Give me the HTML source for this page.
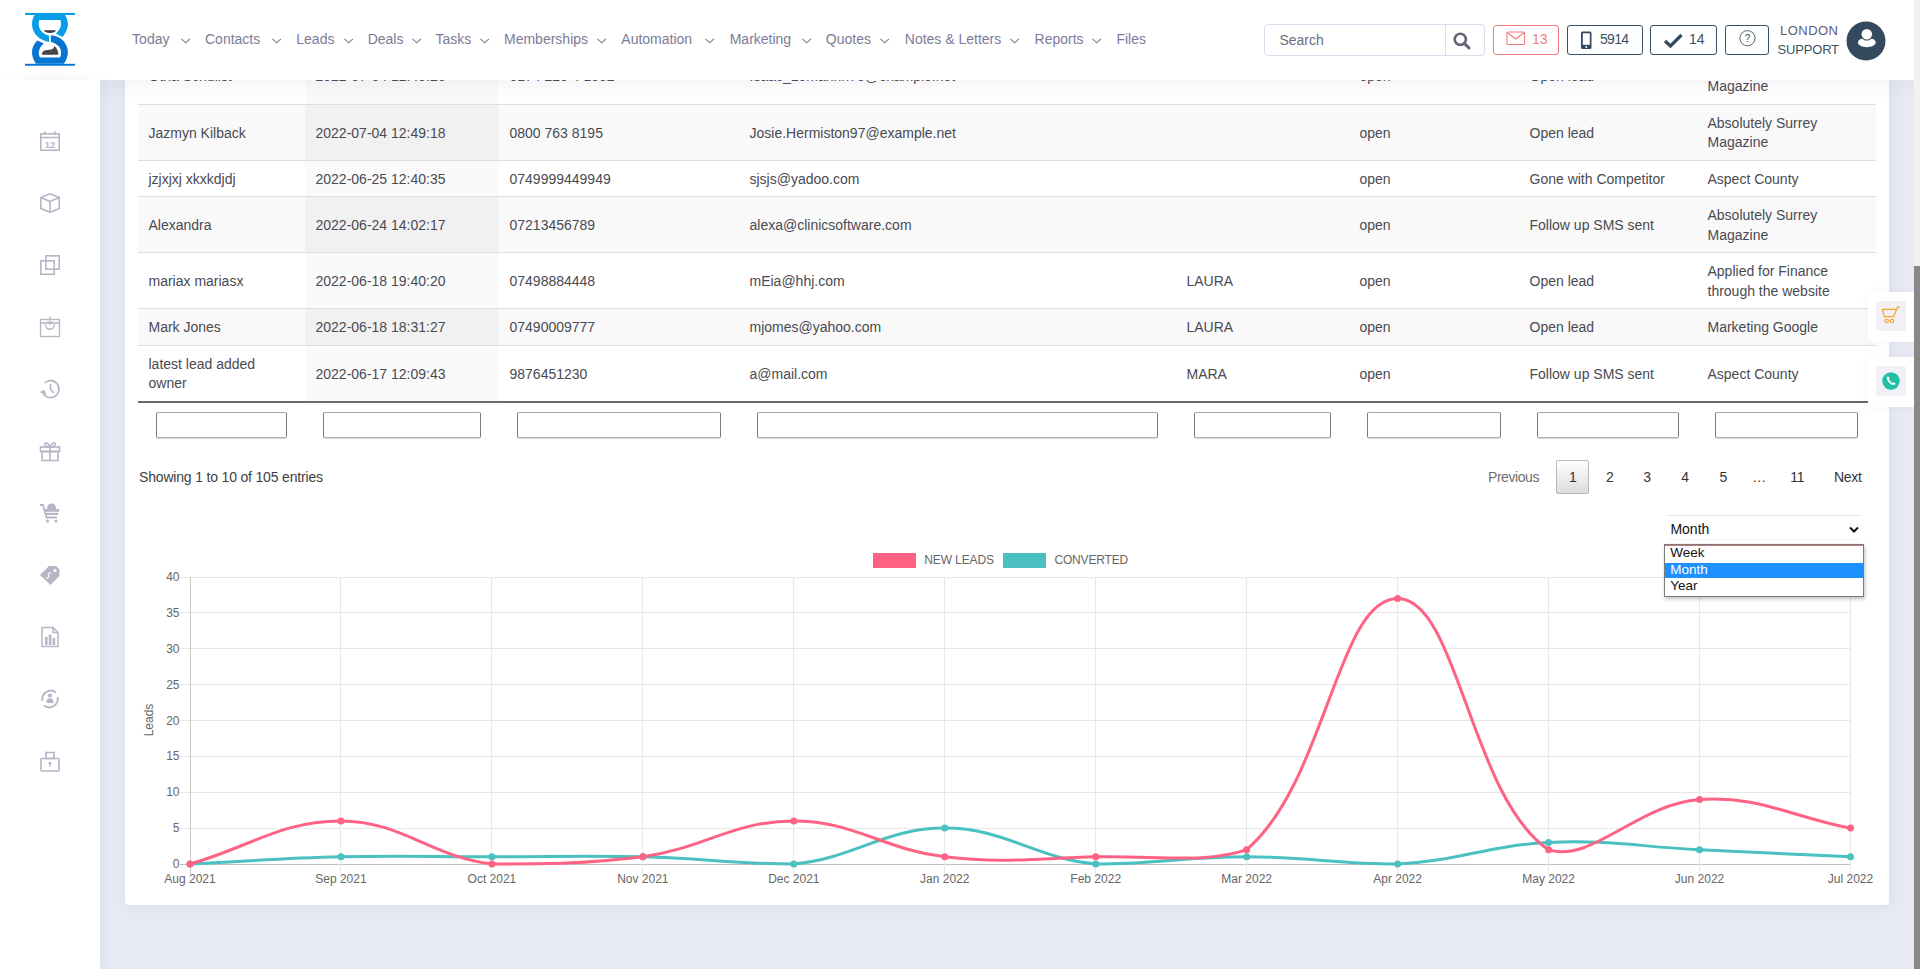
<!DOCTYPE html>
<html><head><meta charset="utf-8"><title>Leads</title>
<style>
html,body{margin:0;padding:0;}
body{width:1920px;height:969px;overflow:hidden;position:relative;background:#fff;font-family:"Liberation Sans",sans-serif;}
.t{position:absolute;white-space:nowrap;font-family:"Liberation Sans",sans-serif;}
</style></head><body>
<div style="position:absolute;left:100px;top:0px;width:1814px;height:969px;background:#e7e9f3;"></div>
<div style="position:absolute;left:0px;top:0px;width:100px;height:969px;background:#fff;box-shadow:2px 0 12px rgba(120,125,160,0.10);"></div>
<div style="position:absolute;left:125px;top:20px;width:1764px;height:885px;background:#fff;border-radius:4px;box-shadow:0 0 14px rgba(120,125,170,0.10);"></div>
<div style="position:absolute;left:138px;top:47px;width:1738px;height:57px;background:#fff;"></div>
<div style="position:absolute;left:305px;top:47px;width:194px;height:57px;background:#fafafa;"></div>
<div style="position:absolute;left:138px;top:104px;width:1738px;height:56px;background:#f9f9f9;"></div>
<div style="position:absolute;left:305px;top:104px;width:194px;height:56px;background:#f1f1f1;"></div>
<div style="position:absolute;left:138px;top:104px;width:1738px;height:1px;background:#dedede;"></div>
<div style="position:absolute;left:138px;top:160px;width:1738px;height:36px;background:#fff;"></div>
<div style="position:absolute;left:305px;top:160px;width:194px;height:36px;background:#fafafa;"></div>
<div style="position:absolute;left:138px;top:160px;width:1738px;height:1px;background:#dedede;"></div>
<div style="position:absolute;left:138px;top:196px;width:1738px;height:56px;background:#f9f9f9;"></div>
<div style="position:absolute;left:305px;top:196px;width:194px;height:56px;background:#f1f1f1;"></div>
<div style="position:absolute;left:138px;top:196px;width:1738px;height:1px;background:#dedede;"></div>
<div style="position:absolute;left:138px;top:252px;width:1738px;height:56px;background:#fff;"></div>
<div style="position:absolute;left:305px;top:252px;width:194px;height:56px;background:#fafafa;"></div>
<div style="position:absolute;left:138px;top:252px;width:1738px;height:1px;background:#dedede;"></div>
<div style="position:absolute;left:138px;top:308px;width:1738px;height:37px;background:#f9f9f9;"></div>
<div style="position:absolute;left:305px;top:308px;width:194px;height:37px;background:#f1f1f1;"></div>
<div style="position:absolute;left:138px;top:308px;width:1738px;height:1px;background:#dedede;"></div>
<div style="position:absolute;left:138px;top:345px;width:1738px;height:56px;background:#fff;"></div>
<div style="position:absolute;left:305px;top:345px;width:194px;height:56px;background:#fafafa;"></div>
<div style="position:absolute;left:138px;top:345px;width:1738px;height:1px;background:#dedede;"></div>
<div style="position:absolute;left:138px;top:401px;width:1738px;height:2px;background:#6a6a6a;"></div>
<div class="t" style="left:148.50px;top:69.05px;font-size:14px;line-height:14px;color:#4a4a52;">Otha Schulist</div>
<div class="t" style="left:315.50px;top:69.05px;font-size:14px;line-height:14px;color:#4a4a52;">2022-07-04 12:49:26</div>
<div class="t" style="left:509.50px;top:69.05px;font-size:14px;line-height:14px;color:#4a4a52;">0174 220 4 1552</div>
<div class="t" style="left:749.50px;top:69.05px;font-size:14px;line-height:14px;color:#4a4a52;">Isaac_Lemanhn70@example.net</div>
<div class="t" style="left:1359.50px;top:69.05px;font-size:14px;line-height:14px;color:#4a4a52;">open</div>
<div class="t" style="left:1529.50px;top:69.05px;font-size:14px;line-height:14px;color:#4a4a52;">Open lead</div>
<div class="t" style="left:1707.50px;top:59.30px;font-size:14px;line-height:14px;color:#4a4a52;">Absolutely Surrey</div>
<div class="t" style="left:1707.50px;top:78.80px;font-size:14px;line-height:14px;color:#4a4a52;">Magazine</div>
<div class="t" style="left:148.50px;top:125.55px;font-size:14px;line-height:14px;color:#4a4a52;">Jazmyn Kilback</div>
<div class="t" style="left:315.50px;top:125.55px;font-size:14px;line-height:14px;color:#4a4a52;">2022-07-04 12:49:18</div>
<div class="t" style="left:509.50px;top:125.55px;font-size:14px;line-height:14px;color:#4a4a52;">0800 763 8195</div>
<div class="t" style="left:749.50px;top:125.55px;font-size:14px;line-height:14px;color:#4a4a52;">Josie.Hermiston97@example.net</div>
<div class="t" style="left:1359.50px;top:125.55px;font-size:14px;line-height:14px;color:#4a4a52;">open</div>
<div class="t" style="left:1529.50px;top:125.55px;font-size:14px;line-height:14px;color:#4a4a52;">Open lead</div>
<div class="t" style="left:1707.50px;top:115.80px;font-size:14px;line-height:14px;color:#4a4a52;">Absolutely Surrey</div>
<div class="t" style="left:1707.50px;top:135.30px;font-size:14px;line-height:14px;color:#4a4a52;">Magazine</div>
<div class="t" style="left:148.50px;top:171.80px;font-size:14px;line-height:14px;color:#4a4a52;">jzjxjxj xkxkdjdj</div>
<div class="t" style="left:315.50px;top:171.80px;font-size:14px;line-height:14px;color:#4a4a52;">2022-06-25 12:40:35</div>
<div class="t" style="left:509.50px;top:171.80px;font-size:14px;line-height:14px;color:#4a4a52;">0749999449949</div>
<div class="t" style="left:749.50px;top:171.80px;font-size:14px;line-height:14px;color:#4a4a52;">sjsjs@yadoo.com</div>
<div class="t" style="left:1359.50px;top:171.80px;font-size:14px;line-height:14px;color:#4a4a52;">open</div>
<div class="t" style="left:1529.50px;top:171.80px;font-size:14px;line-height:14px;color:#4a4a52;">Gone with Competitor</div>
<div class="t" style="left:1707.50px;top:171.80px;font-size:14px;line-height:14px;color:#4a4a52;">Aspect County</div>
<div class="t" style="left:148.50px;top:218.05px;font-size:14px;line-height:14px;color:#4a4a52;">Alexandra</div>
<div class="t" style="left:315.50px;top:218.05px;font-size:14px;line-height:14px;color:#4a4a52;">2022-06-24 14:02:17</div>
<div class="t" style="left:509.50px;top:218.05px;font-size:14px;line-height:14px;color:#4a4a52;">07213456789</div>
<div class="t" style="left:749.50px;top:218.05px;font-size:14px;line-height:14px;color:#4a4a52;">alexa@clinicsoftware.com</div>
<div class="t" style="left:1359.50px;top:218.05px;font-size:14px;line-height:14px;color:#4a4a52;">open</div>
<div class="t" style="left:1529.50px;top:218.05px;font-size:14px;line-height:14px;color:#4a4a52;">Follow up SMS sent</div>
<div class="t" style="left:1707.50px;top:208.30px;font-size:14px;line-height:14px;color:#4a4a52;">Absolutely Surrey</div>
<div class="t" style="left:1707.50px;top:227.80px;font-size:14px;line-height:14px;color:#4a4a52;">Magazine</div>
<div class="t" style="left:148.50px;top:274.05px;font-size:14px;line-height:14px;color:#4a4a52;">mariax mariasx</div>
<div class="t" style="left:315.50px;top:274.05px;font-size:14px;line-height:14px;color:#4a4a52;">2022-06-18 19:40:20</div>
<div class="t" style="left:509.50px;top:274.05px;font-size:14px;line-height:14px;color:#4a4a52;">07498884448</div>
<div class="t" style="left:749.50px;top:274.05px;font-size:14px;line-height:14px;color:#4a4a52;">mEia@hhj.com</div>
<div class="t" style="left:1186.50px;top:274.05px;font-size:14px;line-height:14px;color:#4a4a52;">LAURA</div>
<div class="t" style="left:1359.50px;top:274.05px;font-size:14px;line-height:14px;color:#4a4a52;">open</div>
<div class="t" style="left:1529.50px;top:274.05px;font-size:14px;line-height:14px;color:#4a4a52;">Open lead</div>
<div class="t" style="left:1707.50px;top:264.30px;font-size:14px;line-height:14px;color:#4a4a52;">Applied for Finance</div>
<div class="t" style="left:1707.50px;top:283.80px;font-size:14px;line-height:14px;color:#4a4a52;">through the website</div>
<div class="t" style="left:148.50px;top:320.30px;font-size:14px;line-height:14px;color:#4a4a52;">Mark Jones</div>
<div class="t" style="left:315.50px;top:320.30px;font-size:14px;line-height:14px;color:#4a4a52;">2022-06-18 18:31:27</div>
<div class="t" style="left:509.50px;top:320.30px;font-size:14px;line-height:14px;color:#4a4a52;">07490009777</div>
<div class="t" style="left:749.50px;top:320.30px;font-size:14px;line-height:14px;color:#4a4a52;">mjomes@yahoo.com</div>
<div class="t" style="left:1186.50px;top:320.30px;font-size:14px;line-height:14px;color:#4a4a52;">LAURA</div>
<div class="t" style="left:1359.50px;top:320.30px;font-size:14px;line-height:14px;color:#4a4a52;">open</div>
<div class="t" style="left:1529.50px;top:320.30px;font-size:14px;line-height:14px;color:#4a4a52;">Open lead</div>
<div class="t" style="left:1707.50px;top:320.30px;font-size:14px;line-height:14px;color:#4a4a52;">Marketing Google</div>
<div class="t" style="left:148.50px;top:356.80px;font-size:14px;line-height:14px;color:#4a4a52;">latest lead added</div>
<div class="t" style="left:148.50px;top:376.30px;font-size:14px;line-height:14px;color:#4a4a52;">owner</div>
<div class="t" style="left:315.50px;top:366.55px;font-size:14px;line-height:14px;color:#4a4a52;">2022-06-17 12:09:43</div>
<div class="t" style="left:509.50px;top:366.55px;font-size:14px;line-height:14px;color:#4a4a52;">9876451230</div>
<div class="t" style="left:749.50px;top:366.55px;font-size:14px;line-height:14px;color:#4a4a52;">a@mail.com</div>
<div class="t" style="left:1186.50px;top:366.55px;font-size:14px;line-height:14px;color:#4a4a52;">MARA</div>
<div class="t" style="left:1359.50px;top:366.55px;font-size:14px;line-height:14px;color:#4a4a52;">open</div>
<div class="t" style="left:1529.50px;top:366.55px;font-size:14px;line-height:14px;color:#4a4a52;">Follow up SMS sent</div>
<div class="t" style="left:1707.50px;top:366.55px;font-size:14px;line-height:14px;color:#4a4a52;">Aspect County</div>
<div style="position:absolute;left:156px;top:412px;width:131px;height:26px;box-sizing:border-box;border:1px solid #7a7a7a;border-top-color:#a8a8a8;border-bottom-color:#b0b0b0;border-radius:2px;background:#fff;box-shadow:0 1px 0 #d8d8d8;"></div>
<div style="position:absolute;left:323px;top:412px;width:158px;height:26px;box-sizing:border-box;border:1px solid #7a7a7a;border-top-color:#a8a8a8;border-bottom-color:#b0b0b0;border-radius:2px;background:#fff;box-shadow:0 1px 0 #d8d8d8;"></div>
<div style="position:absolute;left:517px;top:412px;width:204px;height:26px;box-sizing:border-box;border:1px solid #7a7a7a;border-top-color:#a8a8a8;border-bottom-color:#b0b0b0;border-radius:2px;background:#fff;box-shadow:0 1px 0 #d8d8d8;"></div>
<div style="position:absolute;left:757px;top:412px;width:401px;height:26px;box-sizing:border-box;border:1px solid #7a7a7a;border-top-color:#a8a8a8;border-bottom-color:#b0b0b0;border-radius:2px;background:#fff;box-shadow:0 1px 0 #d8d8d8;"></div>
<div style="position:absolute;left:1194px;top:412px;width:137px;height:26px;box-sizing:border-box;border:1px solid #7a7a7a;border-top-color:#a8a8a8;border-bottom-color:#b0b0b0;border-radius:2px;background:#fff;box-shadow:0 1px 0 #d8d8d8;"></div>
<div style="position:absolute;left:1367px;top:412px;width:134px;height:26px;box-sizing:border-box;border:1px solid #7a7a7a;border-top-color:#a8a8a8;border-bottom-color:#b0b0b0;border-radius:2px;background:#fff;box-shadow:0 1px 0 #d8d8d8;"></div>
<div style="position:absolute;left:1537px;top:412px;width:142px;height:26px;box-sizing:border-box;border:1px solid #7a7a7a;border-top-color:#a8a8a8;border-bottom-color:#b0b0b0;border-radius:2px;background:#fff;box-shadow:0 1px 0 #d8d8d8;"></div>
<div style="position:absolute;left:1715px;top:412px;width:143px;height:26px;box-sizing:border-box;border:1px solid #7a7a7a;border-top-color:#a8a8a8;border-bottom-color:#b0b0b0;border-radius:2px;background:#fff;box-shadow:0 1px 0 #d8d8d8;"></div>
<div class="t" style="left:139.00px;top:469.65px;font-size:14px;line-height:14px;color:#3e3e44;letter-spacing:-0.177px;">Showing 1 to 10 of 105 entries</div>
<div class="t" style="left:1488.00px;top:469.65px;font-size:14px;line-height:14px;color:#6f6f6f;letter-spacing:-0.438px;">Previous</div>
<div style="position:absolute;left:1556px;top:460px;width:33px;height:34px;box-sizing:border-box;border:1px solid #b9b9b9;border-radius:2px;background:linear-gradient(#fff,#dcdcdc);"></div>
<div class="t" style="left:1569.11px;top:469.65px;font-size:14px;line-height:14px;color:#333;">1</div>
<div class="t" style="left:1606.11px;top:469.65px;font-size:14px;line-height:14px;color:#333;">2</div>
<div class="t" style="left:1643.31px;top:469.65px;font-size:14px;line-height:14px;color:#333;">3</div>
<div class="t" style="left:1681.31px;top:469.65px;font-size:14px;line-height:14px;color:#333;">4</div>
<div class="t" style="left:1719.61px;top:469.65px;font-size:14px;line-height:14px;color:#333;">5</div>
<div class="t" style="left:1752.30px;top:469.65px;font-size:14px;line-height:14px;color:#333;">…</div>
<div class="t" style="left:1790.13px;top:469.65px;font-size:14px;line-height:14px;color:#333;">11</div>
<div class="t" style="left:1834.00px;top:469.65px;font-size:14px;line-height:14px;color:#333;letter-spacing:-0.329px;">Next</div>
<svg width="1920" height="969" style="position:absolute;left:0;top:0">
<line x1="180" y1="864.5" x2="1851" y2="864.5" stroke="#c2c2c2" stroke-width="1"/>
<line x1="180" y1="828.5" x2="1851" y2="828.5" stroke="#e8e8e8" stroke-width="1"/>
<line x1="180" y1="792.5" x2="1851" y2="792.5" stroke="#e8e8e8" stroke-width="1"/>
<line x1="180" y1="756.5" x2="1851" y2="756.5" stroke="#e8e8e8" stroke-width="1"/>
<line x1="180" y1="720.5" x2="1851" y2="720.5" stroke="#e8e8e8" stroke-width="1"/>
<line x1="180" y1="684.5" x2="1851" y2="684.5" stroke="#e8e8e8" stroke-width="1"/>
<line x1="180" y1="648.5" x2="1851" y2="648.5" stroke="#e8e8e8" stroke-width="1"/>
<line x1="180" y1="612.5" x2="1851" y2="612.5" stroke="#e8e8e8" stroke-width="1"/>
<line x1="180" y1="577.5" x2="1851" y2="577.5" stroke="#e8e8e8" stroke-width="1"/>
<line x1="190.5" y1="577" x2="190.5" y2="874" stroke="#c8c8c8" stroke-width="1"/>
<line x1="340.5" y1="577" x2="340.5" y2="874" stroke="#e8e8e8" stroke-width="1"/>
<line x1="491.5" y1="577" x2="491.5" y2="874" stroke="#e8e8e8" stroke-width="1"/>
<line x1="642.5" y1="577" x2="642.5" y2="874" stroke="#e8e8e8" stroke-width="1"/>
<line x1="793.5" y1="577" x2="793.5" y2="874" stroke="#e8e8e8" stroke-width="1"/>
<line x1="944.5" y1="577" x2="944.5" y2="874" stroke="#e8e8e8" stroke-width="1"/>
<line x1="1095.5" y1="577" x2="1095.5" y2="874" stroke="#e8e8e8" stroke-width="1"/>
<line x1="1246.5" y1="577" x2="1246.5" y2="874" stroke="#e8e8e8" stroke-width="1"/>
<line x1="1397.5" y1="577" x2="1397.5" y2="874" stroke="#e8e8e8" stroke-width="1"/>
<line x1="1548.5" y1="577" x2="1548.5" y2="874" stroke="#e8e8e8" stroke-width="1"/>
<line x1="1699.5" y1="577" x2="1699.5" y2="874" stroke="#e8e8e8" stroke-width="1"/>
<line x1="1850.5" y1="577" x2="1850.5" y2="874" stroke="#e8e8e8" stroke-width="1"/>
<path d="M190.00,864.00 C250.38,861.13 280.54,858.26 340.95,856.83 C401.30,855.39 431.53,856.83 491.91,856.83 C552.29,856.83 582.52,855.39 642.86,856.83 C703.28,858.26 734.23,864.00 793.82,864.00 C855.00,858.18 884.39,828.12 944.77,828.12 C1005.15,828.12 1034.55,858.18 1095.73,864.00 C1155.31,864.00 1186.30,856.83 1246.68,856.83 C1307.06,856.83 1337.52,864.00 1397.64,864.00 C1458.29,861.12 1487.94,845.36 1548.59,842.48 C1608.70,839.62 1639.16,846.78 1699.55,849.65 C1759.93,852.52 1790.12,853.96 1850.50,856.83" fill="none" stroke="#4bc0c0" stroke-width="3"/>
<path d="M190.00,864.00 C250.38,846.78 280.57,820.95 340.95,820.95 C401.34,820.95 430.38,856.69 491.91,864.00 C551.14,864.00 583.28,864.00 642.86,856.83 C704.04,848.10 733.44,820.95 793.82,820.95 C854.20,820.95 883.56,849.55 944.77,856.83 C1004.33,863.90 1035.38,858.26 1095.73,856.83 C1156.14,855.39 1205.59,864.00 1246.68,849.65 C1326.35,781.49 1337.25,598.52 1397.64,598.52 C1458.02,598.52 1470.32,797.57 1548.59,849.65 C1591.09,864.00 1638.11,803.80 1699.55,799.42 C1758.88,795.19 1790.12,816.64 1850.50,828.12" fill="none" stroke="#ff6384" stroke-width="3"/>
<circle cx="190.00" cy="864.00" r="3.5" fill="#4bc0c0"/>
<circle cx="340.95" cy="856.83" r="3.5" fill="#4bc0c0"/>
<circle cx="491.91" cy="856.83" r="3.5" fill="#4bc0c0"/>
<circle cx="642.86" cy="856.83" r="3.5" fill="#4bc0c0"/>
<circle cx="793.82" cy="864.00" r="3.5" fill="#4bc0c0"/>
<circle cx="944.77" cy="828.12" r="3.5" fill="#4bc0c0"/>
<circle cx="1095.73" cy="864.00" r="3.5" fill="#4bc0c0"/>
<circle cx="1246.68" cy="856.83" r="3.5" fill="#4bc0c0"/>
<circle cx="1397.64" cy="864.00" r="3.5" fill="#4bc0c0"/>
<circle cx="1548.59" cy="842.48" r="3.5" fill="#4bc0c0"/>
<circle cx="1699.55" cy="849.65" r="3.5" fill="#4bc0c0"/>
<circle cx="1850.50" cy="856.83" r="3.5" fill="#4bc0c0"/>
<circle cx="190.00" cy="864.00" r="3.5" fill="#ff6384"/>
<circle cx="340.95" cy="820.95" r="3.5" fill="#ff6384"/>
<circle cx="491.91" cy="864.00" r="3.5" fill="#ff6384"/>
<circle cx="642.86" cy="856.83" r="3.5" fill="#ff6384"/>
<circle cx="793.82" cy="820.95" r="3.5" fill="#ff6384"/>
<circle cx="944.77" cy="856.83" r="3.5" fill="#ff6384"/>
<circle cx="1095.73" cy="856.83" r="3.5" fill="#ff6384"/>
<circle cx="1246.68" cy="849.65" r="3.5" fill="#ff6384"/>
<circle cx="1397.64" cy="598.52" r="3.5" fill="#ff6384"/>
<circle cx="1548.59" cy="849.65" r="3.5" fill="#ff6384"/>
<circle cx="1699.55" cy="799.42" r="3.5" fill="#ff6384"/>
<circle cx="1850.50" cy="828.12" r="3.5" fill="#ff6384"/>
<rect x="873" y="553" width="43" height="15" fill="#ff6384"/>
<rect x="1003" y="553" width="43" height="15" fill="#4bc0c0"/>
</svg>
<div class="t" style="left:924.20px;top:553.64px;font-size:12px;line-height:12px;color:#666;letter-spacing:-0.111px;">NEW LEADS</div>
<div class="t" style="left:1054.40px;top:553.64px;font-size:12px;line-height:12px;color:#666;letter-spacing:-0.153px;">CONVERTED</div>
<div class="t" style="left:172.83px;top:858.04px;font-size:12px;line-height:12px;color:#666;">0</div>
<div class="t" style="left:172.83px;top:822.17px;font-size:12px;line-height:12px;color:#666;">5</div>
<div class="t" style="left:166.15px;top:786.29px;font-size:12px;line-height:12px;color:#666;">10</div>
<div class="t" style="left:166.15px;top:750.42px;font-size:12px;line-height:12px;color:#666;">15</div>
<div class="t" style="left:166.15px;top:714.54px;font-size:12px;line-height:12px;color:#666;">20</div>
<div class="t" style="left:166.15px;top:678.67px;font-size:12px;line-height:12px;color:#666;">25</div>
<div class="t" style="left:166.15px;top:642.79px;font-size:12px;line-height:12px;color:#666;">30</div>
<div class="t" style="left:166.15px;top:606.92px;font-size:12px;line-height:12px;color:#666;">35</div>
<div class="t" style="left:166.15px;top:571.04px;font-size:12px;line-height:12px;color:#666;">40</div>
<div class="t" style="left:164.31px;top:872.84px;font-size:12px;line-height:12px;color:#666;">Aug 2021</div>
<div class="t" style="left:315.26px;top:872.84px;font-size:12px;line-height:12px;color:#666;">Sep 2021</div>
<div class="t" style="left:467.56px;top:872.84px;font-size:12px;line-height:12px;color:#666;">Oct 2021</div>
<div class="t" style="left:617.18px;top:872.84px;font-size:12px;line-height:12px;color:#666;">Nov 2021</div>
<div class="t" style="left:768.13px;top:872.84px;font-size:12px;line-height:12px;color:#666;">Dec 2021</div>
<div class="t" style="left:920.09px;top:872.84px;font-size:12px;line-height:12px;color:#666;">Jan 2022</div>
<div class="t" style="left:1070.37px;top:872.84px;font-size:12px;line-height:12px;color:#666;">Feb 2022</div>
<div class="t" style="left:1221.33px;top:872.84px;font-size:12px;line-height:12px;color:#666;">Mar 2022</div>
<div class="t" style="left:1373.28px;top:872.84px;font-size:12px;line-height:12px;color:#666;">Apr 2022</div>
<div class="t" style="left:1522.24px;top:872.84px;font-size:12px;line-height:12px;color:#666;">May 2022</div>
<div class="t" style="left:1674.86px;top:872.84px;font-size:12px;line-height:12px;color:#666;">Jun 2022</div>
<div class="t" style="left:1827.82px;top:872.84px;font-size:12px;line-height:12px;color:#666;">Jul 2022</div>
<div class="t" style="left:124px;top:714px;width:50px;text-align:center;font-size:12px;line-height:12px;color:#666;transform:rotate(-90deg);">Leads</div>
<div style="position:absolute;left:1667px;top:515px;width:193px;height:23px;border-top:1px solid #e6e6e6;border-bottom:1px solid #f2f2f2;background:#fff;"></div>
<div class="t" style="left:1670.40px;top:522.45px;font-size:14px;line-height:14px;color:#111;">Month</div>
<svg style="position:absolute;left:1849px;top:526px" width="10" height="8"><path d="M1,1.5 L5,5.5 L9,1.5" fill="none" stroke="#111" stroke-width="2"/></svg>
<div style="position:absolute;left:1664px;top:544px;width:200px;height:53px;box-sizing:border-box;border:1px solid #7a7a7a;background:#fff;box-shadow:1px 2px 4px rgba(0,0,0,0.25);"></div>
<div style="position:absolute;left:1665px;top:545px;width:198px;height:1px;background:#c47a7a;"></div>
<div style="position:absolute;left:1665px;top:562.5px;width:198px;height:15.5px;background:#1e90ff;"></div>
<div class="t" style="left:1670.20px;top:545.57px;font-size:13.5px;line-height:13.5px;color:#111;">Week</div>
<div class="t" style="left:1670.20px;top:563.07px;font-size:13.5px;line-height:13.5px;color:#fff;">Month</div>
<div class="t" style="left:1670.20px;top:579.37px;font-size:13.5px;line-height:13.5px;color:#111;">Year</div>
<div style="position:absolute;left:1868px;top:292px;width:46px;height:50px;background:#fff;border-radius:5px 0 0 5px;box-shadow:0 0 8px rgba(100,100,140,0.06);"></div>
<div style="position:absolute;left:1876px;top:301px;width:30px;height:30px;background:#f0f0f6;border-radius:3px;"></div>
<div style="position:absolute;left:1868px;top:357px;width:46px;height:50px;background:#fff;border-radius:5px 0 0 5px;box-shadow:0 0 8px rgba(100,100,140,0.06);"></div>
<div style="position:absolute;left:1876px;top:366px;width:30px;height:30px;background:#f0f0f6;border-radius:3px;"></div>
<svg style="position:absolute;left:1881px;top:306px" width="20" height="20" viewBox="0 0 20 20"><path d="M1.3,3.3 L14.9,3.3 M1.3,3.3 L3.3,10.6 L12.6,10.6 L16.6,1 L18.2,1" fill="none" stroke="#f5a623" stroke-width="1.25" stroke-linejoin="round" stroke-linecap="round"/><circle cx="5.6" cy="15" r="1.75" fill="none" stroke="#f5a623" stroke-width="1.2"/><circle cx="11" cy="15" r="1.75" fill="none" stroke="#f5a623" stroke-width="1.2"/></svg>
<svg style="position:absolute;left:1881px;top:370.5px" width="20" height="20" viewBox="0 0 20 20"><circle cx="10" cy="10" r="8.7" fill="#1fbfa6"/><path d="M6.6,5.6 C6,6 5.6,6.8 5.9,8 C6.6,10.6 9.2,13.3 11.9,14 C13.1,14.3 13.9,13.9 14.3,13.3 L14.5,12.6 L12.5,11.3 L11.5,12 C10.2,11.4 8.6,9.8 8,8.5 L8.7,7.5 L7.4,5.5 Z" fill="#fff"/></svg>
<div style="position:absolute;left:0px;top:0px;width:1914px;height:80px;background:#fff;box-shadow:0 4px 18px rgba(90,95,130,0.08);"></div>
<div style="position:absolute;left:0px;top:80px;width:100px;height:889px;background:#fff;"></div>
<div style="position:absolute;left:0px;top:60px;width:130px;height:20px;background:radial-gradient(ellipse 60px 14px at 55px 22px, rgba(120,120,150,0.07), rgba(120,120,150,0) 100%);"></div>
<svg style="position:absolute;left:25px;top:12px" width="50" height="56" viewBox="0 0 50 56">
<g transform="translate(3,0)">
<rect x="-3" y="0.95" width="50" height="2.05" fill="#0a9de7"/>
<rect x="-3" y="51.8" width="50" height="1.95" fill="#0575d3"/>
<path d="M6.66,2.95 L37,2.95 C38.8,5.5 39.9,8.5 39.9,11.9 C39.9,16.5 37.5,21.5 34.4,24.9 L27.9,21.5 C30.5,19 33,15.5 33,11.9 C33,10 32.8,8.6 32.35,7.9 L11.45,7.9 C11,8.6 10.7,10 10.7,11.9 C10.7,17.5 15,22.2 21.05,23.4 L21.05,29.9 C17,29.5 12.5,27.5 9.3,24.3 C6,21 4,16.5 4,11.9 C4,8.5 5,5.5 6.66,2.95 Z" fill="#0a9de7"/>
<path d="M22.9,23.2 C28,23.6 32.5,25.5 35.5,29 C38.5,32.5 39.9,36.5 39.9,40.4 C39.9,44.5 38,48.5 35.9,51.8 L8,51.8 C5.8,48.5 4,44.5 4,40.4 C4,36 5.8,32 9.3,28.6 L15.8,31.4 C13.5,33.5 10.8,36.5 10.8,40.4 C10.8,42.5 11.2,44 12,45.6 L31.9,45.6 C32.7,44 33.1,42.5 33.1,40.4 C33.1,36.8 31.5,34.5 29.4,33.3 C27.8,31.5 25.8,30.3 22.9,29.9 Z" fill="#0575d3"/>
<path d="M15.9,18.2 C17,18.4 27,18.4 28,18.2 C27.3,20 25,20.9 22,20.9 C19,20.9 16.7,20 15.9,18.2 Z" fill="#3c3c3c"/>
<path d="M13.9,42.7 L30.3,42.7 C30.5,39.5 29,36 26.3,33.9 C25.8,35.8 25,36.8 24.3,37.1 C23,37.8 20,37.9 17.5,38.3 C15,38.8 14,40.5 13.9,42.7 Z" fill="#474747"/>
</g></svg>
<div class="t" style="left:132.10px;top:32.35px;font-size:14px;line-height:14px;color:#7d7b97;">Today</div>
<svg style="position:absolute;left:180.8px;top:38px" width="10" height="6"><path d="M0.5,0.8 L4.7,4.8 L8.9,0.8" fill="none" stroke="#7d7b97" stroke-width="1.1"/></svg>
<div class="t" style="left:205.00px;top:32.35px;font-size:14px;line-height:14px;color:#7d7b97;">Contacts</div>
<svg style="position:absolute;left:272.0px;top:38px" width="10" height="6"><path d="M0.5,0.8 L4.7,4.8 L8.9,0.8" fill="none" stroke="#7d7b97" stroke-width="1.1"/></svg>
<div class="t" style="left:296.30px;top:32.35px;font-size:14px;line-height:14px;color:#7d7b97;">Leads</div>
<svg style="position:absolute;left:343.8px;top:38px" width="10" height="6"><path d="M0.5,0.8 L4.7,4.8 L8.9,0.8" fill="none" stroke="#7d7b97" stroke-width="1.1"/></svg>
<div class="t" style="left:367.70px;top:32.35px;font-size:14px;line-height:14px;color:#7d7b97;">Deals</div>
<svg style="position:absolute;left:411.9px;top:38px" width="10" height="6"><path d="M0.5,0.8 L4.7,4.8 L8.9,0.8" fill="none" stroke="#7d7b97" stroke-width="1.1"/></svg>
<div class="t" style="left:435.50px;top:32.35px;font-size:14px;line-height:14px;color:#7d7b97;">Tasks</div>
<svg style="position:absolute;left:480.0px;top:38px" width="10" height="6"><path d="M0.5,0.8 L4.7,4.8 L8.9,0.8" fill="none" stroke="#7d7b97" stroke-width="1.1"/></svg>
<div class="t" style="left:504.00px;top:32.35px;font-size:14px;line-height:14px;color:#7d7b97;">Memberships</div>
<svg style="position:absolute;left:597.0px;top:38px" width="10" height="6"><path d="M0.5,0.8 L4.7,4.8 L8.9,0.8" fill="none" stroke="#7d7b97" stroke-width="1.1"/></svg>
<div class="t" style="left:621.30px;top:32.35px;font-size:14px;line-height:14px;color:#7d7b97;">Automation</div>
<svg style="position:absolute;left:705.3px;top:38px" width="10" height="6"><path d="M0.5,0.8 L4.7,4.8 L8.9,0.8" fill="none" stroke="#7d7b97" stroke-width="1.1"/></svg>
<div class="t" style="left:729.70px;top:32.35px;font-size:14px;line-height:14px;color:#7d7b97;">Marketing</div>
<svg style="position:absolute;left:801.7px;top:38px" width="10" height="6"><path d="M0.5,0.8 L4.7,4.8 L8.9,0.8" fill="none" stroke="#7d7b97" stroke-width="1.1"/></svg>
<div class="t" style="left:825.80px;top:32.35px;font-size:14px;line-height:14px;color:#7d7b97;">Quotes</div>
<svg style="position:absolute;left:880.3px;top:38px" width="10" height="6"><path d="M0.5,0.8 L4.7,4.8 L8.9,0.8" fill="none" stroke="#7d7b97" stroke-width="1.1"/></svg>
<div class="t" style="left:904.80px;top:32.35px;font-size:14px;line-height:14px;color:#7d7b97;">Notes &amp; Letters</div>
<svg style="position:absolute;left:1009.8px;top:38px" width="10" height="6"><path d="M0.5,0.8 L4.7,4.8 L8.9,0.8" fill="none" stroke="#7d7b97" stroke-width="1.1"/></svg>
<div class="t" style="left:1034.60px;top:32.35px;font-size:14px;line-height:14px;color:#7d7b97;">Reports</div>
<svg style="position:absolute;left:1091.8px;top:38px" width="10" height="6"><path d="M0.5,0.8 L4.7,4.8 L8.9,0.8" fill="none" stroke="#7d7b97" stroke-width="1.1"/></svg>
<div class="t" style="left:1116.40px;top:32.35px;font-size:14px;line-height:14px;color:#7d7b97;">Files</div>
<div style="position:absolute;left:1264px;top:24px;width:221px;height:32px;box-sizing:border-box;border:1px solid #dcdcec;border-radius:4px;background:#fff;"></div>
<div style="position:absolute;left:1445px;top:25px;width:1px;height:30px;background:#dcdcec;"></div>
<div class="t" style="left:1279.40px;top:33.15px;font-size:14px;line-height:14px;color:#6c6c7e;">Search</div>
<svg style="position:absolute;left:1452px;top:31px" width="20" height="20" viewBox="0 0 20 20"><circle cx="8.3" cy="8.3" r="5.6" fill="none" stroke="#656579" stroke-width="2.6"/><path d="M12.4,12.4 L17,17" stroke="#656579" stroke-width="3" stroke-linecap="round"/></svg>
<div style="position:absolute;left:1493px;top:25px;width:66px;height:30px;box-sizing:border-box;border:1px solid #f07d80;border-radius:3px;"></div>
<svg style="position:absolute;left:1506px;top:31px" width="20" height="15" viewBox="0 0 20 15"><rect x="1" y="1" width="17.5" height="12.5" rx="1" fill="none" stroke="#f07d80" stroke-width="1.1"/><path d="M1.2,1.5 L9.75,8 L18.3,1.5" fill="none" stroke="#f07d80" stroke-width="1.1"/></svg>
<div class="t" style="left:1532.00px;top:32.15px;font-size:14px;line-height:14px;color:#f07d80;">13</div>
<div style="position:absolute;left:1567px;top:25px;width:76px;height:30px;box-sizing:border-box;border:1.5px solid #3b4f64;border-radius:3px;"></div>
<svg style="position:absolute;left:1579px;top:30px" width="15" height="20" viewBox="0 0 15 20"><rect x="2" y="1.5" width="10.5" height="17.5" rx="1.5" fill="#34495e"/><rect x="3.8" y="3.3" width="7" height="11.5" fill="#fff"/><circle cx="7.25" cy="16.9" r="1" fill="#fff"/></svg>
<div class="t" style="left:1600.00px;top:32.15px;font-size:14px;line-height:14px;color:#3b4f64;letter-spacing:-0.715px;">5914</div>
<div style="position:absolute;left:1650px;top:25px;width:67px;height:30px;box-sizing:border-box;border:1.5px solid #3b4f64;border-radius:3px;"></div>
<svg style="position:absolute;left:1663px;top:32px" width="21" height="17" viewBox="0 0 21 17"><path d="M2,9 L7.5,14 L18.5,3" fill="none" stroke="#34495e" stroke-width="3.3"/></svg>
<div class="t" style="left:1689.00px;top:32.15px;font-size:14px;line-height:14px;color:#3b4f64;">14</div>
<div style="position:absolute;left:1725px;top:25px;width:44px;height:30px;box-sizing:border-box;border:1.5px solid #3b4f64;border-radius:3px;"></div>
<svg style="position:absolute;left:1738px;top:29px" width="19" height="19" viewBox="0 0 19 19"><circle cx="9.5" cy="9.2" r="7.6" fill="none" stroke="#3b4f64" stroke-width="0.9"/><text x="9.5" y="12.6" text-anchor="middle" font-family="Liberation Sans" font-size="10" fill="#3b4f64">?</text></svg>
<div class="t" style="left:1780.00px;top:24.00px;font-size:13px;line-height:13px;color:#5d5a78;letter-spacing:0.477px;">LONDON</div>
<div class="t" style="left:1777.55px;top:43.00px;font-size:13px;line-height:13px;color:#3d5166;letter-spacing:-0.184px;">SUPPORT</div>
<svg style="position:absolute;left:1845.5px;top:21px" width="40" height="40" viewBox="0 0 40 40"><circle cx="20" cy="20" r="19.5" fill="#34495e"/><circle cx="20.8" cy="13.3" r="5.3" fill="#fff"/><path d="M11.8,21.8 C12.2,19.2 14,18 16.3,17.8 C17.8,19.2 19.2,19.6 20.8,19.6 C22.4,19.6 23.8,19.2 25.3,17.8 C27.6,18 29.4,19.2 29.8,21.8 C29,24.5 25.5,26.2 20.8,26.2 C16.1,26.2 12.6,24.5 11.8,21.8 Z" fill="#fff"/></svg>
<svg style="position:absolute;left:39px;top:130px" width="22" height="22" viewBox="0 0 22 22"><rect x="1.8" y="3.8" width="18.4" height="16.4" fill="none" stroke="#b5b6c6" stroke-width="1.6"/><path d="M1.8,7.6 H20.2 M6,1.2 V5 M16,1.2 V5" stroke="#b5b6c6" stroke-width="1.5"/><text x="11" y="17.6" text-anchor="middle" font-family="Liberation Sans" font-size="9.5" font-weight="bold" fill="#b5b6c6">12</text></svg>
<svg style="position:absolute;left:39px;top:192px" width="22" height="22" viewBox="0 0 22 22"><path d="M11,1.8 L20.2,5.6 L20.2,16.4 L11,20.2 L1.8,16.4 L1.8,5.6 Z M1.8,5.6 L11,9.6 L20.2,5.6 M11,9.6 V20.2" fill="none" stroke="#b5b6c6" stroke-width="1.6" stroke-linejoin="round"/></svg>
<svg style="position:absolute;left:39px;top:254px" width="22" height="22" viewBox="0 0 22 22"><rect x="6.8" y="1.8" width="13.4" height="13.4" fill="none" stroke="#b5b6c6" stroke-width="1.6"/><rect x="1.8" y="6.8" width="13.4" height="13.4" fill="none" stroke="#b5b6c6" stroke-width="1.6"/></svg>
<svg style="position:absolute;left:39px;top:316px" width="22" height="22" viewBox="0 0 22 22"><rect x="1.5" y="3.5" width="19" height="17" fill="none" stroke="#b5b6c6" stroke-width="1.3"/><path d="M1.5,7 H20.5 M11,0.5 V8 M8.5,5.5 L11,8 L13.5,5.5 M6.5,8 C6.5,15 15.5,15 15.5,8" fill="none" stroke="#b5b6c6" stroke-width="1.3"/></svg>
<svg style="position:absolute;left:39px;top:378px" width="22" height="22" viewBox="0 0 22 22"><path d="M3.5,14 A8.5,8.5 0 1 0 5.5,5" fill="none" stroke="#b5b6c6" stroke-width="1.7"/><path d="M1.5,14.5 L5,13 L6.5,16.5" fill="none" stroke="#b5b6c6" stroke-width="1.7"/><path d="M11.5,6 V11.5 L15,15" fill="none" stroke="#b5b6c6" stroke-width="1.7"/></svg>
<svg style="position:absolute;left:39px;top:440px" width="22" height="22" viewBox="0 0 22 22"><rect x="1.5" y="7" width="19" height="4.5" fill="none" stroke="#b5b6c6" stroke-width="1.6"/><rect x="3" y="11.5" width="16" height="9" fill="none" stroke="#b5b6c6" stroke-width="1.6"/><path d="M11,7 V20.5 M11,7 C9,2 5,2 6,5 C6.5,6.5 9,7 11,7 C13,7 15.5,6.5 16,5 C17,2 13,2 11,7" fill="none" stroke="#b5b6c6" stroke-width="1.6"/></svg>
<svg style="position:absolute;left:39px;top:502px" width="22" height="22" viewBox="0 0 22 22"><path d="M1,3 L4,3 L7.5,15.5 L18,15.5" fill="none" stroke="#b5b6c6" stroke-width="1.8"/><path d="M5,7 L20.5,7 L19,13 L6.5,13 Z" fill="#b5b6c6"/><path d="M8,7 C8,3 10,1.5 12.5,1.5 C15,1.5 17,3 17,7 Z" fill="#b5b6c6"/><rect x="7" y="9.8" width="13" height="1" fill="#fff"/><circle cx="8.5" cy="19" r="1.6" fill="#b5b6c6"/><circle cx="17" cy="19" r="1.6" fill="#b5b6c6"/></svg>
<svg style="position:absolute;left:39px;top:564px" width="22" height="22" viewBox="0 0 22 22"><path d="M1,11 L10,2 L17,2 L20.5,5.5 L20.5,12 L11.5,21 Z" fill="#b5b6c6"/><circle cx="16" cy="6.5" r="1.6" fill="#fff"/><path d="M7,13.5 C8.5,15 10.5,13 9.5,11.5 C8.5,10 10.5,8 12,9.5" fill="none" stroke="#fff" stroke-width="1.1"/></svg>
<svg style="position:absolute;left:39px;top:626px" width="22" height="22" viewBox="0 0 22 22"><path d="M3,1.5 L14,1.5 L19,6.5 L19,20.5 L3,20.5 Z M14,1.5 V6.5 H19" fill="none" stroke="#b5b6c6" stroke-width="1.5"/><rect x="6" y="11" width="2.6" height="8" fill="#b5b6c6"/><rect x="9.8" y="8.5" width="2.6" height="10.5" fill="#b5b6c6"/><rect x="13.6" y="12" width="2.6" height="7" fill="#b5b6c6"/></svg>
<svg style="position:absolute;left:39px;top:688px" width="22" height="22" viewBox="0 0 22 22"><path d="M3.5,13 A8.5,8.5 0 0 1 17,4.5 M18.5,9 A8.5,8.5 0 0 1 5,17.5" fill="none" stroke="#b5b6c6" stroke-width="1.9"/><circle cx="11" cy="7.5" r="2.1" fill="#b5b6c6"/><path d="M7.5,15 C7.5,11 9,10.3 11,10.3 C13,10.3 14.5,11 14.5,15 Z" fill="#b5b6c6"/></svg>
<svg style="position:absolute;left:39px;top:750px" width="22" height="22" viewBox="0 0 22 22"><rect x="2" y="8.5" width="18" height="12.5" rx="0.8" fill="none" stroke="#b5b6c6" stroke-width="1.6"/><rect x="7" y="2.5" width="8" height="6" fill="none" stroke="#b5b6c6" stroke-width="1.6"/><circle cx="11" cy="13.5" r="1.4" fill="#b5b6c6"/><rect x="10.4" y="13.5" width="1.2" height="3.5" fill="#b5b6c6"/></svg>
<div style="position:absolute;left:1914px;top:0px;width:6px;height:969px;background:#f1f1f1;"></div>
<div style="position:absolute;left:1914px;top:266px;width:6px;height:703px;background:#888;"></div>
</body></html>
